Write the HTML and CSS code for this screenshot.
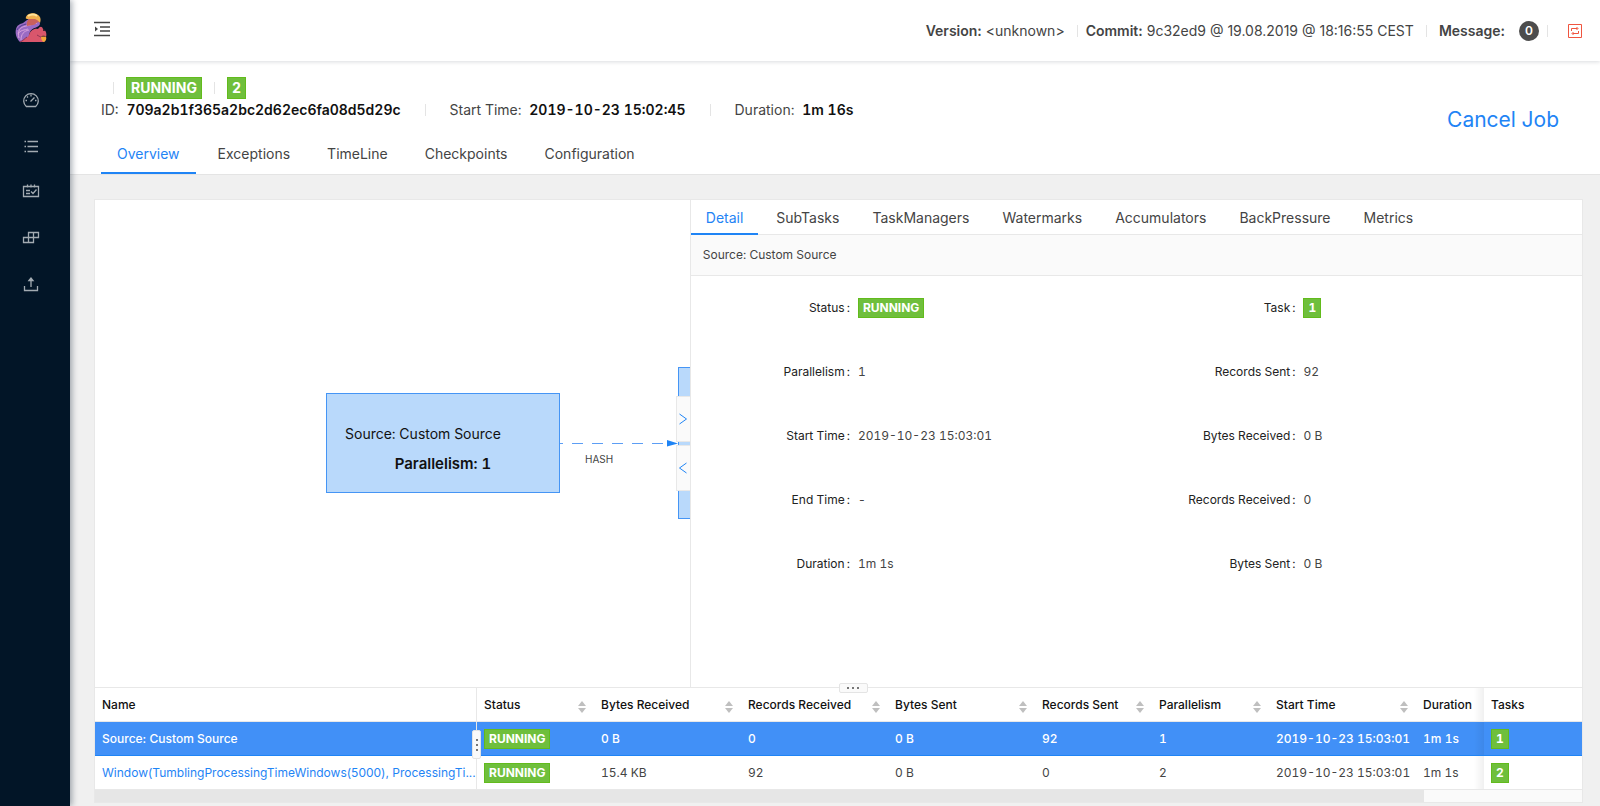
FILE: index.html
```html
<!DOCTYPE html>
<html lang="en">
<head>
  <meta charset="utf-8">
  <title>Apache Flink Web Dashboard</title>
  <link rel="stylesheet" href="styles.css">
</head>
<body>
  <aside class="sidebar">
    <a class="logo" href="#" aria-label="Apache Flink">
      <svg width="32" height="32" viewBox="0 0 32 32">
        <path d="M5 30C1 26 0 21 1 17c1-4 4-5 7-6 2-1 3-3 6-4 5-1 11 1 11 5-1 4-8 3-10 8-2 4-1 8 0 10z" fill="#9a6bc4"/>
        <path d="M4 26c-2-7 1-11 7-12 5-1 7-2 11-3M3 22c2-4 7-4 10-5M6 28c0-6 3-9 8-10" fill="none" stroke="#d9a3dd"/>
        <path d="M2 18c2-4 6-5 9-6" fill="none" stroke="#4b3c8c"/>
        <path d="M12 14c-1-4 1-7 4-8 4-1 8 1 8 4-3 0-3 3-6 3z" fill="#c9605b"/>
        <path d="M11 5c1-4 9-5 12-2 3 2 3 5 2 8-3-5-7-4-10-4-3 0-5 0-4-2z" fill="#f0b04e"/>
        <path d="M13 4c3-2 7-2 9 0" fill="none" stroke="#ffe39a" stroke-width="2"/>
        <path d="M5 30c4-3 8-4 9-7 1-4 5-7 9-6 2-3 4-3 5 0 3 1 4 5 3 8l-1 3-1 2z" fill="#d9566c"/>
        <path d="M5 30c3-1 5-4 7-5M22 23c2 1 3 2 4 2" fill="none" stroke="#8d3551"/>
        <circle cx="29" cy="18" r="1" fill="#16151f"/>
        <path d="M26 25h5c1 2-1 5-2 5s-3-2-3-5z" fill="#f3a73b"/>
        <path d="M26 25c1-2 4-2 5 0z" fill="#7f4c34"/>
      </svg>
    </a>
    <nav class="menu">
      <a href="#" aria-label="Overview">
        <svg width="18" height="18" viewBox="0 0 18 18">
          <path d="M4.3 15.5A7.3 7.3 0 1 1 13.7 15.5z" />
          <path d="M8.5 10.5L12.500 6.500M9 3.500v2M3.500 9.500h1.500M13 9.500h1.500M5 5.500l1 1"/>
        </svg>
      </a>
      <a href="#" aria-label="Running Jobs">
        <svg width="18" height="18" viewBox="0 0 18 18"><path d="M5.500 4.500H16M5.500 9.500H16M5.500 14.500H16M2.500 4.500H4M2.500 9.500H4M2.500 14.500H4"/></svg>
      </a>
      <a href="#" aria-label="Completed Jobs">
        <svg width="18" height="18" viewBox="0 0 18 18"><path d="M1.500 3.500h15v10h-15zM5.500 1.500v3M9 1.500v3M12.500 1.500v3M4 7.500h4M4 10.500h4M9 8.500l2 2 3.500-4"/></svg>
      </a>
      <a href="#" aria-label="Task Managers">
        <svg width="18" height="18" viewBox="0 0 18 18"><path d="M6.500 3.500h10v5h-10zM1.500 8.500h10v5h-10zM6.500 8.500v5M11.500 3.500v5"/></svg>
      </a>
      <a href="#" aria-label="Submit New Job">
        <svg width="18" height="18" viewBox="0 0 18 18"><path d="M2.500 11v4.500h13V11M9 12V4M7 5.500l2-2.500 2 2.500z"/></svg>
      </a>
    </nav>
  </aside>

  <div class="page">
    <header class="topbar">
      <button class="fold" aria-label="Toggle menu">
        <svg width="16" height="16" viewBox="0 0 16 16"><path d="M0 1.500h16M6 6h10M6 10h10M0 14.500h16" fill="none" stroke="#444" stroke-width="1.300"/><path d="M1 5.500l3 2.500-3 2.500z" fill="#444"/></svg>
      </button>
      <div class="build">
        <span><strong>Version:</strong> &lt;unknown&gt;</span>
        <i class="divider"></i>
        <span><strong>Commit:</strong> 9c32ed9 @ 19.08.2019 @ 18:16:55 CEST</span>
        <i class="divider divider-wide"></i>
        <strong>Message:</strong>
        <span class="count">0</span>
        <i class="divider"></i>
        <button class="refresh" aria-label="Messages">
          <svg width="16" height="16" viewBox="0 0 16 16"><path d="M1.500 1.500h13v13h-13zM4.500 8V5.500h6M9.500 4l1.500 1.500L9.500 7M11.500 8v2.500h-6M6.500 9L5 10.500 6.500 12" fill="none" stroke="#f0553f"/></svg>
        </button>
      </div>
    </header>

    <section class="job">
      <div class="job-info">
        <div class="job-state">
          <i class="divider"></i>
          <span class="tag">RUNNING</span>
          <i class="divider"></i>
          <span class="tag">2</span>
        </div>
        <div class="job-meta">
          <span>ID: <strong>709a2b1f365a2bc2d62ec6fa08d5d29c</strong></span>
          <i class="divider"></i>
          <span>Start Time: <strong>2019-10-23 15:02:45</strong></span>
          <i class="divider"></i>
          <span>Duration: <strong>1m 16s</strong></span>
        </div>
        <nav class="tabs job-tabs">
          <a class="active" href="#">Overview</a>
          <a href="#">Exceptions</a>
          <a href="#">TimeLine</a>
          <a href="#">Checkpoints</a>
          <a href="#">Configuration</a>
        </nav>
      </div>
      <a class="cancel" href="#">Cancel Job</a>
    </section>

    <main class="panel">
      <div class="split">
        <div class="graph">
          <div class="node node-source">
            <p>Source: Custom Source</p>
            <p class="node-count">Parallelism: 1</p>
          </div>
          <div class="node node-window"></div>
          <svg class="edge" width="118" height="12" viewBox="0 0 118 12">
            <path d="M0 6.500h106" stroke="#5c9ef5" stroke-dasharray="11 9" stroke-dashoffset="8"/>
            <path d="M107 3l11 3.500-11 3z" fill="#1f84f5"/>
          </svg>
          <span class="edge-label">HASH</span>
          <div class="resize">
            <button aria-label="Expand graph"><svg width="8" height="12" viewBox="0 0 8 12"><path d="M.5 1l7 5-7 5"/></svg></button>
            <button aria-label="Collapse graph"><svg width="8" height="12" viewBox="0 0 8 12"><path d="M7.500 1l-7 5 7 5"/></svg></button>
          </div>
        </div>

        <div class="detail">
          <nav class="tabs detail-tabs">
            <a class="active" href="#">Detail</a>
            <a href="#">SubTasks</a>
            <a href="#">TaskManagers</a>
            <a href="#">Watermarks</a>
            <a href="#">Accumulators</a>
            <a href="#">BackPressure</a>
            <a href="#">Metrics</a>
          </nav>
          <div class="vertex-name">Source: Custom Source</div>
          <dl class="facts">
            <dt>Status</dt><dd><span class="tag tag-small">RUNNING</span></dd>
            <dt>Task</dt><dd><span class="tag tag-small">1</span></dd>
            <dt>Parallelism</dt><dd>1</dd>
            <dt>Records Sent</dt><dd>92</dd>
            <dt>Start Time</dt><dd>2019-10-23 15:03:01</dd>
            <dt>Bytes Received</dt><dd>0 B</dd>
            <dt>End Time</dt><dd>-</dd>
            <dt>Records Received</dt><dd>0</dd>
            <dt>Duration</dt><dd>1m 1s</dd>
            <dt>Bytes Sent</dt><dd>0 B</dd>
          </dl>
        </div>
      </div>

      <div class="vertices">
        <button class="grip grip-top" aria-label="Resize table"><i></i><i></i><i></i></button>
        <table>
          <colgroup>
            <col>
            <col class="col-small">
            <col class="col-wide">
            <col class="col-wide">
            <col class="col-wide">
            <col class="col-small">
            <col class="col-small">
            <col class="col-wide">
            <col class="col-duration">
            <col class="col-tasks">
          </colgroup>
          <thead>
            <tr>
              <th class="name">Name</th>
              <th class="sort">Status</th>
              <th class="sort">Bytes Received</th>
              <th class="sort">Records Received</th>
              <th class="sort">Bytes Sent</th>
              <th class="sort">Records Sent</th>
              <th class="sort">Parallelism</th>
              <th class="sort">Start Time</th>
              <th class="last">Duration</th>
              <th>Tasks</th>
            </tr>
          </thead>
          <tbody>
            <tr class="selected">
              <td class="name"><a href="#">Source: Custom Source</a></td>
              <td><span class="tag tag-small">RUNNING</span></td>
              <td>0 B</td>
              <td>0</td>
              <td>0 B</td>
              <td>92</td>
              <td>1</td>
              <td>2019-10-23 15:03:01</td>
              <td class="last">1m 1s</td>
              <td><span class="tag tag-small">1</span></td>
            </tr>
            <tr>
              <td class="name"><a href="#">Window(TumblingProcessingTimeWindows(5000), ProcessingTi...</a></td>
              <td><span class="tag tag-small">RUNNING</span></td>
              <td>15.4 KB</td>
              <td>92</td>
              <td>0 B</td>
              <td>0</td>
              <td>2</td>
              <td>2019-10-23 15:03:01</td>
              <td class="last">1m 1s</td>
              <td><span class="tag tag-small">2</span></td>
            </tr>
          </tbody>
        </table>
        <button class="grip grip-side" aria-label="Resize name column"><i></i><i></i><i></i></button>
        <div class="scrollbar"><div class="thumb"></div></div>
      </div>
    </main>
  </div>
</body>
</html>
```
FILE: styles.css
```css
* {
  box-sizing: border-box;
}

body, p, dl, dd {
  margin: 0;
}

body {
  display: flex;
  min-height: 100vh;
  background-color: #f0f0f0;
  color: #444;
  font-family: Inter, "Liberation Sans", sans-serif;
  font-size: 14px;
  font-variant-numeric: tabular-nums;
  line-height: 20px;
}

a {
  color: #1f84f5;
  text-decoration: none;
}

button {
  padding: 0;
  border: none;
  background: none;
  cursor: pointer;
}

svg {
  display: block;
}

strong {
  font-weight: 600;
}

/* sidebar */
.sidebar {
  display: flex;
  flex-direction: column;
  align-items: center;
  flex: none;
  width: 70px;
  padding: 12px 8px 0 0;
  background-color: #021527;
  box-shadow: 2px 0 6px rgba(0, 21, 41, 0.35);
  z-index: 2;
}

.menu {
  display: flex;
  flex-direction: column;
  gap: 28px;
  margin-top: 47px;
}

.menu svg {
  fill: none;
  stroke: #a3abb2;
  stroke-width: 1.3;
}

.page {
  display: flex;
  flex-direction: column;
  flex: 1;
  min-width: 0;
}

/* top bar */
.topbar {
  display: flex;
  justify-content: space-between;
  align-items: center;
  height: 61px;
  padding: 0 17px 0 24px;
  background-color: #fff;
  box-shadow: 0 1px 4px rgba(0, 21, 41, 0.15);
  z-index: 1;
}

.fold {
  margin-bottom: 4px;
}

.build {
  display: flex;
  align-items: center;
  font-variant-numeric: normal;
}

.divider {
  width: 1px;
  height: 12px;
  margin: 0 8px 0 12px;
  background-color: #e4e4e4;
}

.divider-wide {
  margin: 0 12px;
}

.count {
  min-width: 20px;
  margin-left: 14px;
  border-radius: 10px;
  background-color: #4d4d4d;
  color: #fff;
  font-size: 12px;
  font-weight: 600;
  text-align: center;
}

.build .count + .divider {
  margin: 0 19px 0 8px;
}

/* job header */
.job {
  display: flex;
  justify-content: space-between;
  align-items: flex-start;
  padding: 16px 41px 0 31px;
  border-bottom: 1px solid #e4e4e4;
  background-color: #fff;
}

.job-state {
  display: flex;
  align-items: center;
}

.job-state .divider {
  margin: 0 12px;
}

.job-meta {
  display: flex;
  align-items: center;
  line-height: 21px;
}

.job-meta .divider {
  margin: 0 24px;
}

.job-meta strong {
  margin-left: 4px;
  color: #111;
}

.tag {
  display: inline-block;
  min-width: 18px;
  padding: 0 4px;
  background-color: #6fbf3c;
  border: 1px solid #62bb1c;
  color: #fff;
  font-size: 14px;
  font-weight: 700;
  line-height: 20px;
  text-align: center;
}

.tag-small {
  font-size: 12px;
  line-height: 18px;
}

.tabs {
  display: flex;
}

.tabs a {
  padding: 0 16px;
  border-bottom: 2px solid transparent;
  color: #444;
}

.tabs .active {
  border-color: #1f84f5;
  color: #1f84f5;
}

.job-tabs {
  gap: 7px;
}

.job-tabs a {
  height: 54px;
  padding: 15px 15px 0;
  line-height: 38px;
}

.job-tabs .active {
  padding: 15px 16px 0;
}

.cancel {
  margin-top: 29px;
  font-size: 21px;
  line-height: 28px;
}

/* main panel */
.panel {
  display: flex;
  flex-direction: column;
  flex: 1;
  margin: 24px 17px 3px 24px;
  border: 1px solid #e8e8e8;
  background-color: #fff;
}

.split {
  display: flex;
  flex: 1;
}

.graph {
  box-sizing: content-box;
  position: relative;
  width: 40%;
  overflow: hidden;
  border-right: 1px solid #e8e8e8;
}

.node {
  position: absolute;
  border: 1px solid #4595f5;
  background-color: #b9d9fb;
  color: #111;
}

.node-source {
  top: 193px;
  left: 231px;
  width: 234px;
  height: 100px;
  padding: 30px 18px 0;
}

.node-count {
  margin-top: 10px;
  font-size: 15px;
  font-weight: 600;
  text-align: center;
}

.node-window {
  top: 167px;
  left: 583px;
  width: 234px;
  height: 152px;
}

.edge {
  position: absolute;
  top: 237px;
  left: 465px;
}

.edge-label {
  position: absolute;
  top: 249px;
  left: 490px;
  font-size: 10px;
}

.resize {
  position: absolute;
  top: 196px;
  right: 0;
  display: flex;
  flex-direction: column;
  gap: 3px;
}

.resize button {
  display: flex;
  align-items: center;
  justify-content: center;
  width: 14px;
  height: 46px;
  border: 1px solid #e8e8e8;
  border-right: none;
  background-color: #fafafa;
}

.resize path {
  fill: none;
  stroke: #1f84f5;
}

/* vertex detail */
.detail {
  flex: 1;
}

.detail-tabs {
  gap: 3px;
  border-bottom: 1px solid #e8e8e8;
}

.detail-tabs a {
  padding: 2px 15px 0;
  margin-bottom: -1px;
  line-height: 31px;
}

.vertex-name {
  padding: 0 12px;
  border-bottom: 1px solid #e8e8e8;
  background-color: #fafafa;
  font-size: 12px;
  line-height: 40px;
}

.facts {
  display: grid;
  grid-template-columns: 3fr 5fr 3fr 5fr;
  row-gap: 24px;
  padding-top: 12px;
  font-size: 12px;
  line-height: 40px;
}

.facts dt {
  padding-right: 8px;
  color: #222;
  text-align: right;
}

.facts dt::after {
  content: ":";
  margin-left: 2px;
}

/* vertices table */
.vertices {
  position: relative;
  border-top: 1px solid #e8e8e8;
}

table {
  width: 100%;
  border-collapse: separate;
  border-spacing: 0;
  table-layout: fixed;
  font-size: 12px;
}

.col-small {
  width: 117px;
}

.col-wide {
  width: 147px;
}

.col-duration {
  width: 68px;
}

.col-tasks {
  width: 98px;
}

th, td {
  height: 34px;
  padding: 0 8px 0 7px;
  border-bottom: 1px solid #e8e8e8;
  text-align: left;
  white-space: nowrap;
}

th {
  color: #111;
  font-weight: 500;
}

.name {
  padding: 0 0 0 7px;
  border-right: 1px solid #e8e8e8;
  font-variant-numeric: normal;
}

.last {
  background-image: linear-gradient(to left, rgba(0, 0, 0, 0.06), transparent 10px);
}

/* sort arrows */
.sort::before, .sort::after {
  content: "";
  float: right;
  clear: right;
  border: 4px solid transparent;
}

.sort::before {
  margin-top: 6px;
  border-top: none;
  border-bottom: 5px solid #bfbfbf;
}

.sort::after {
  margin-top: -7px;
  border-top: 5px solid #bfbfbf;
  border-bottom: none;
}

.selected td {
  border-bottom-color: #1f84f5;
  background-color: #4190f7;
  color: #fff;
  font-weight: 500;
}

.selected a {
  color: #fff;
}

.grip {
  position: absolute;
  display: flex;
  align-items: center;
  justify-content: center;
  gap: 3px;
  border: 1px solid #e4e4e4;
  border-radius: 2px;
  background-color: #fafafa;
}

.grip i {
  width: 2px;
  height: 2px;
  background-color: #777;
}

.grip-top {
  top: -5px;
  left: 50%;
  width: 29px;
  height: 10px;
}

.grip-side {
  top: 42px;
  right: 1101px;
  flex-direction: column;
  width: 9px;
  height: 29px;
}

.scrollbar {
  height: 12px;
  background-color: #fafafa;
}

.thumb {
  height: 12px;
  margin-right: 158px;
  background-color: #e6e6e6;
}
```
